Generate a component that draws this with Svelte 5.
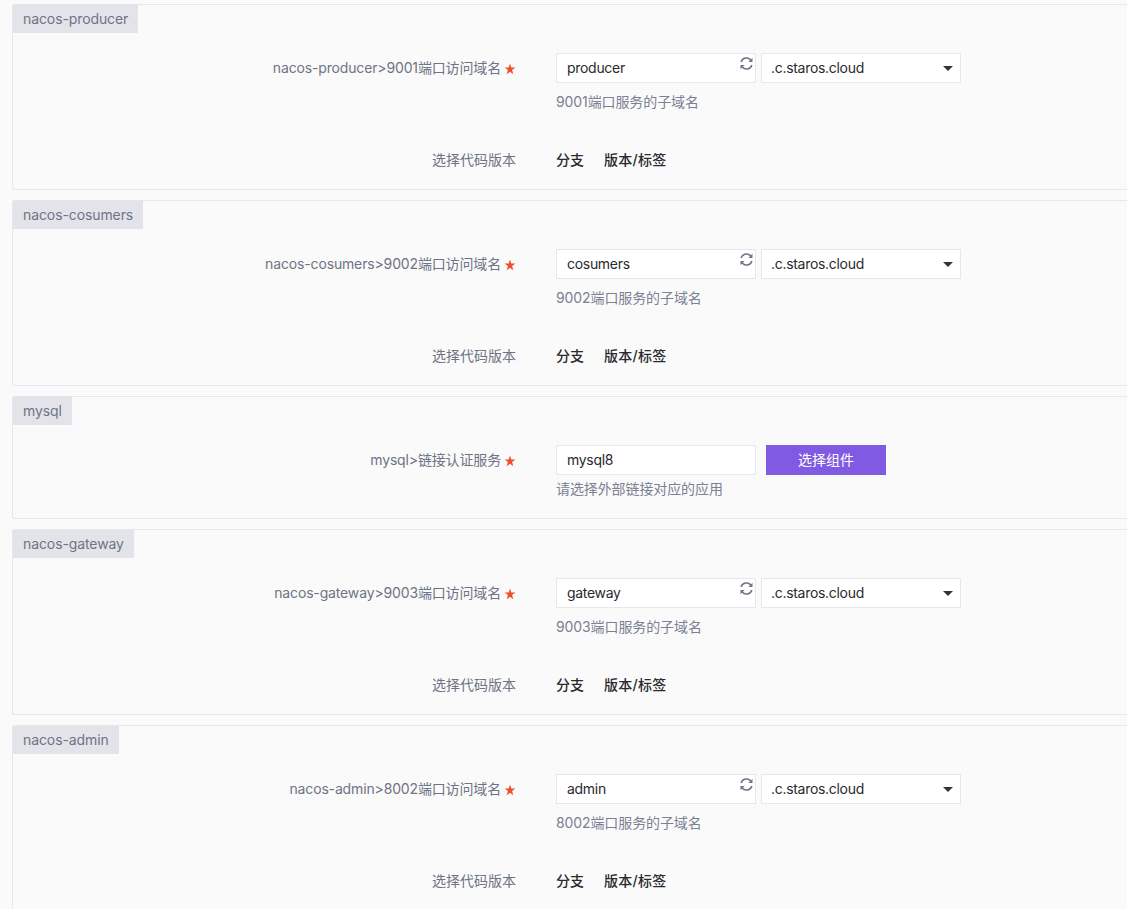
<script lang="ts">
	type Service = {
		name: string;
		kind: "domain" | "link";
		label: string;
		value: string;
		help: string;
	};

	const services: Service[] = [
		{ name: "nacos-producer", kind: "domain", label: "nacos-producer>9001端口访问域名", value: "producer", help: "9001端口服务的子域名" },
		{ name: "nacos-cosumers", kind: "domain", label: "nacos-cosumers>9002端口访问域名", value: "cosumers", help: "9002端口服务的子域名" },
		{ name: "mysql", kind: "link", label: "mysql>链接认证服务", value: "mysql8", help: "请选择外部链接对应的应用" },
		{ name: "nacos-gateway", kind: "domain", label: "nacos-gateway>9003端口访问域名", value: "gateway", help: "9003端口服务的子域名" },
		{ name: "nacos-admin", kind: "domain", label: "nacos-admin>8002端口访问域名", value: "admin", help: "8002端口服务的子域名" }
	];
</script>

<main class="page">
	{#each services as service}
		<section class="panel" class:panel--link={service.kind === "link"}>
			<h3 class="panel__tag">{service.name}</h3>

			<div class="row">
				<div class="row__label">
					<span>{service.label}</span>
					<svg class="star" viewBox="0 0 12 12" aria-hidden="true">
						<polygon points="6,0.6 7.3,4.5 11.4,4.6 8.1,7.1 9.3,11.2 6,8.8 2.7,11.2 3.9,7.1 0.6,4.6 4.7,4.5" />
					</svg>
				</div>
				<div class="row__field">
					<div class="controls">
						<div class="input">
							<input value={service.value} readonly />
							{#if service.kind === "domain"}
								<svg class="refresh" viewBox="0 0 14 14" aria-hidden="true">
									<path d="M2 5.6A5.2 5.2 0 0 1 11 3.7" />
									<path d="M12 8.4A5.2 5.2 0 0 1 3 10.3" />
									<path class="tip" d="M12.6 1.6v3.9H8.8z" />
									<path class="tip" d="M1.4 12.4V8.5h3.8z" />
								</svg>
							{/if}
						</div>
						{#if service.kind === "domain"}
							<div class="select">
								<span>.c.staros.cloud</span>
								<i class="caret"></i>
							</div>
						{:else}
							<button class="pick">选择组件</button>
						{/if}
					</div>
					<p class="help" class:help--wide={service.kind === "domain"}>{service.help}</p>
				</div>
			</div>

			{#if service.kind === "domain"}
				<div class="row row--version">
					<div class="row__label row__label--plain">选择代码版本</div>
					<div class="tabs">
						<span>分支</span>
						<span>版本/标签</span>
					</div>
				</div>
			{/if}
		</section>
	{/each}
</main>

<style>
	:global(body) {
		margin: 0;
		background: #fafafa;
		font-family: Inter, "Noto Sans CJK SC", sans-serif;
		overflow: hidden;
	}

	.page {
		display: flex;
		flex-direction: column;
		gap: 10px;
		padding: 4px 0 0 12px;
		height: 905px;
		overflow: hidden;
	}

	.panel {
		flex: none;
		border: 1px solid #e6e7ec;
		border-right: 0;
		border-radius: 3px 0 0 3px;
		padding-bottom: 20px;
	}

	.panel--link {
		padding-bottom: 19px;
	}

	.panel__tag {
		display: inline-block;
		vertical-align: top;
		margin: 0;
		height: 28px;
		line-height: 28px;
		padding: 0 10px;
		background: #e3e4ea;
		color: #6e7385;
		font-size: 14px;
		font-weight: 400;
		letter-spacing: -0.1px;
	}

	.row {
		display: grid;
		grid-template-columns: 503px 1fr;
		column-gap: 40px;
		margin-top: 20px;
	}

	.row--version {
		margin-top: 37px;
		align-items: center;
		height: 20px;
	}

	.row__label {
		box-sizing: border-box;
		display: flex;
		justify-content: flex-end;
		align-items: center;
		gap: 3px;
		height: 30px;
		padding-bottom: 2px;
		color: #6e7385;
		font-size: 14px;
		letter-spacing: -0.15px;
	}

	.row__label--plain {
		height: 20px;
		padding-bottom: 0;
		letter-spacing: 0;
	}

	.star {
		width: 12px;
		height: 12px;
		margin-top: 4px;
		fill: #ee4f2e;
	}

	.controls {
		display: flex;
		align-items: flex-start;
	}

	.input {
		position: relative;
		width: 200px;
		height: 30px;
	}

	.input input {
		box-sizing: border-box;
		width: 100%;
		height: 100%;
		padding: 0 10px 2px;
		border: 1px solid #e6e7ec;
		border-radius: 0;
		outline: none;
		background: #fff;
		color: #2a2a2e;
		font: 14px Inter, "Noto Sans CJK SC", sans-serif;
		letter-spacing: -0.3px;
	}

	.refresh {
		position: absolute;
		top: 3px;
		right: 2px;
		width: 15px;
		height: 15px;
		fill: none;
		stroke: #6e7385;
		stroke-width: 1.4;
	}

	.refresh .tip {
		fill: #6e7385;
		stroke: none;
	}

	.select {
		box-sizing: border-box;
		display: flex;
		align-items: center;
		justify-content: space-between;
		width: 200px;
		height: 30px;
		margin-left: 5px;
		padding: 0 7px 2px 9px;
		border: 1px solid #e6e7ec;
		background: #fff;
		color: #2a2a2e;
		font-size: 14px;
		letter-spacing: -0.3px;
	}

	.caret {
		width: 0;
		height: 0;
		margin-top: 2px;
		border-left: 5px solid transparent;
		border-right: 5px solid transparent;
		border-top: 5px solid #333;
	}

	.pick {
		width: 120px;
		height: 30px;
		margin-left: 10px;
		padding: 0 0 2px;
		border: 0;
		background: #805ae2;
		color: #fff;
		font: 14px Inter, "Noto Sans CJK SC", sans-serif;
	}

	.help {
		margin: 4px 0 0;
		line-height: 20px;
		color: #7b8093;
		font-size: 14px;
		letter-spacing: -0.1px;
	}

	.help--wide {
		margin-top: 9px;
	}

	.tabs {
		display: flex;
		gap: 20px;
		color: #2a2a2e;
		font-size: 14px;
		font-weight: 500;
		letter-spacing: 0.25px;
	}

	.tabs span:first-child {
		letter-spacing: 0;
	}
</style>
